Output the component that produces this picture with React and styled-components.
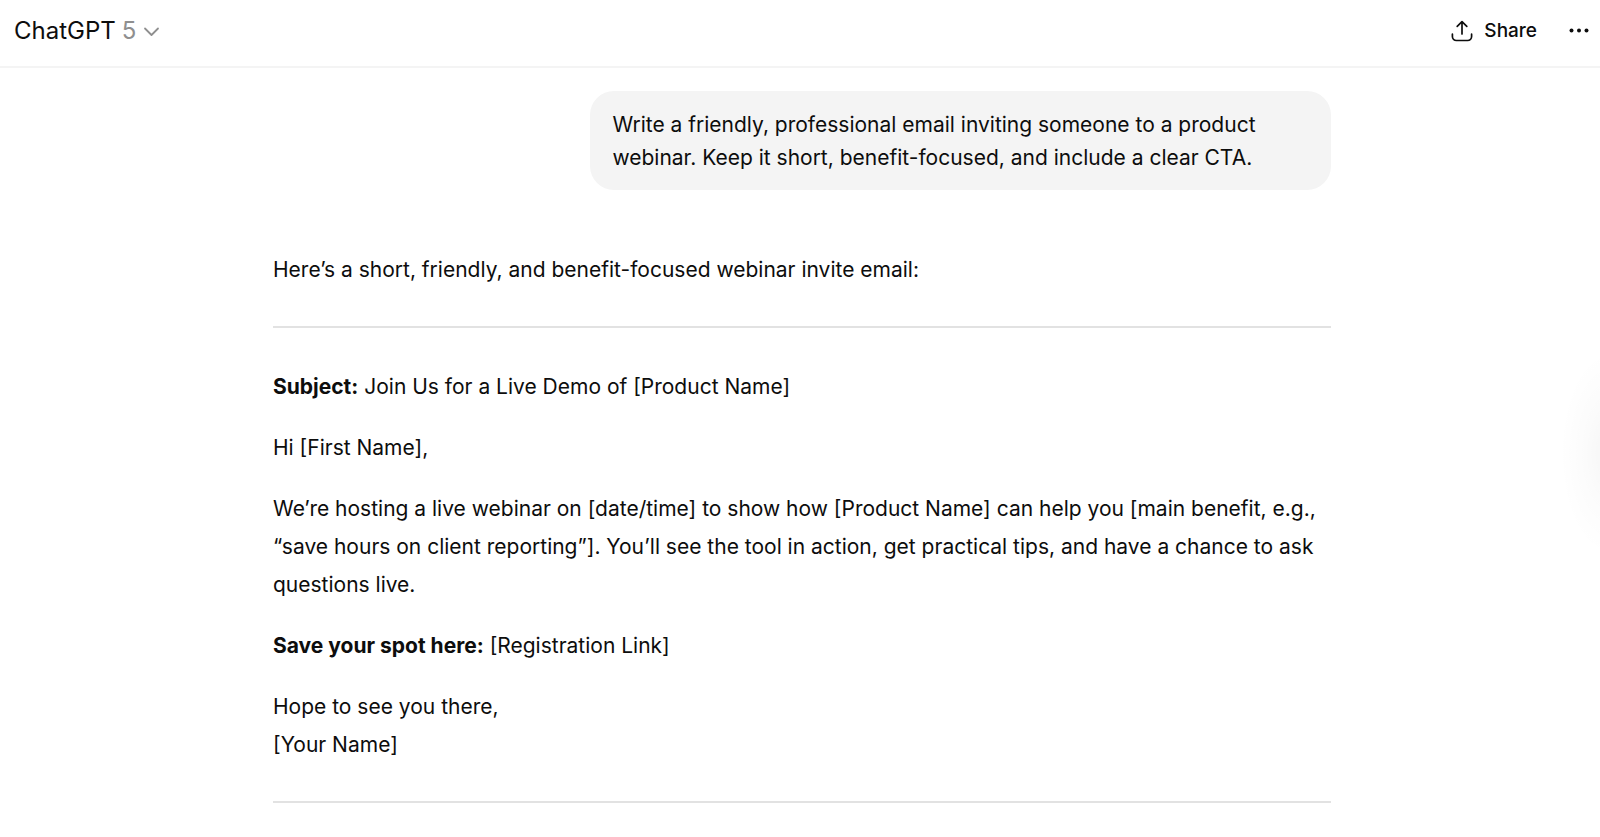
import React from "react";
import styled, { createGlobalStyle } from "styled-components";

const GlobalStyle = createGlobalStyle`
  *, *::before, *::after { box-sizing: border-box; }
  html, body { margin: 0; background: #fff; }
  body {
    color: #0d0d0d;
    font-family: Inter, "Liberation Sans", sans-serif;
    font-size: 21px;
    overflow-x: hidden;
  }
  button {
    margin: 0;
    padding: 0;
    border: 0;
    background: none;
    color: inherit;
    font-family: inherit;
    cursor: pointer;
  }
`;

const Page = styled.div`
  position: relative;
  min-height: 100vh;
  overflow: hidden;
`;

const Header = styled.header`
  display: flex;
  align-items: center;
  justify-content: space-between;
  padding: 11px 10px 15px 14px;
  border-bottom: 2px solid #f4f4f4;
`;

const ModelButton = styled.button`
  display: flex;
  align-items: center;
  gap: 6px;
  font-size: 24px;
  line-height: 40px;
`;

const Version = styled.span`
  color: #8f8f8f;
`;

const Actions = styled.div`
  display: flex;
  align-items: center;
  gap: 31px;
`;

const ActionButton = styled.button`
  display: flex;
  align-items: center;
  gap: 11px;
  font-size: 19px;
  font-weight: 500;
  line-height: 40px;
`;

const Thread = styled.main`
  width: 100%;
  max-width: 1062px;
  margin: 0 auto;
  padding: 23px 0 32px 4px;
`;

const Bubble = styled.p`
  width: 70%;
  margin: 0 0 61px auto;
  padding: 17px 22px 16px;
  border-radius: 24px;
  background: #f4f4f4;
  line-height: 33px;
`;

const Reply = styled.article`
  line-height: 38px;
`;

const Paragraph = styled.p`
  margin: 0 0 23px;
`;

const Strong = styled.strong`
  font-weight: 700;
`;

const Divider = styled.hr`
  height: 2px;
  margin: 37px 0 40px;
  border: 0;
  background: #e2e2e2;
`;

const EdgeGlow = styled.div`
  position: absolute;
  top: 350px;
  right: 0;
  width: 40px;
  height: 206px;
  pointer-events: none;
  background: radial-gradient(
    ellipse 50px 103px at calc(100% + 10px) 50%,
    rgba(0, 0, 0, 0.04),
    rgba(0, 0, 0, 0.014) 50%,
    transparent
  );
`;

const ChevronIcon = () => (
  <svg width="18" height="16" viewBox="0 0 18 16" fill="none" stroke="#8f8f8f" strokeWidth="1.8" strokeLinecap="round" strokeLinejoin="round" aria-hidden="true">
    <path d="M3 5.5 9.5 12 16 5.5" />
  </svg>
);

const ShareIcon = () => (
  <svg width="22" height="22" viewBox="0 0 22 22" fill="none" stroke="currentColor" strokeWidth="1.7" strokeLinecap="round" strokeLinejoin="round" aria-hidden="true">
    <path d="M11 14V1.8M6.2 6.4 11 1.6l4.8 4.8" />
    <path d="M1.4 14.2v2.3a4 4 0 0 0 4 4h11.2a4 4 0 0 0 4-4v-2.3" />
  </svg>
);

const MoreIcon = () => (
  <svg width="22" height="22" viewBox="0 0 22 22" fill="currentColor" aria-hidden="true">
    <circle cx="3.5" cy="10.5" r="2" />
    <circle cx="11" cy="10.5" r="2" />
    <circle cx="18.5" cy="10.5" r="2" />
  </svg>
);

export default function App() {
  return (
    <Page>
      <GlobalStyle />
      <Header>
        <ModelButton type="button">
          <span>ChatGPT</span>
          <Version>5</Version>
          <ChevronIcon />
        </ModelButton>
        <Actions>
          <ActionButton type="button">
            <ShareIcon />
            Share
          </ActionButton>
          <ActionButton type="button" aria-label="More options">
            <MoreIcon />
          </ActionButton>
        </Actions>
      </Header>
      <Thread>
        <Bubble>
          Write a friendly, professional email inviting someone to a product
          webinar. Keep it short, benefit-focused, and include a clear CTA.
        </Bubble>
        <Reply>
          <Paragraph>Here’s a short, friendly, and benefit-focused webinar invite email:</Paragraph>
          <Divider />
          <Paragraph>
            <Strong>Subject:</Strong> Join Us for a Live Demo of [Product Name]
          </Paragraph>
          <Paragraph>Hi [First Name],</Paragraph>
          <Paragraph>
            We’re hosting a live webinar on [date/time] to show how [Product Name] can help you
            [main benefit, e.g., “save hours on client reporting”]. You’ll see the tool in action,
            get practical tips, and have a chance to ask questions live.
          </Paragraph>
          <Paragraph>
            <Strong>Save your spot here:</Strong> [Registration Link]
          </Paragraph>
          <Paragraph>
            Hope to see you there,
            <br />
            [Your Name]
          </Paragraph>
          <Divider />
        </Reply>
      </Thread>
      <EdgeGlow />
    </Page>
  );
}
